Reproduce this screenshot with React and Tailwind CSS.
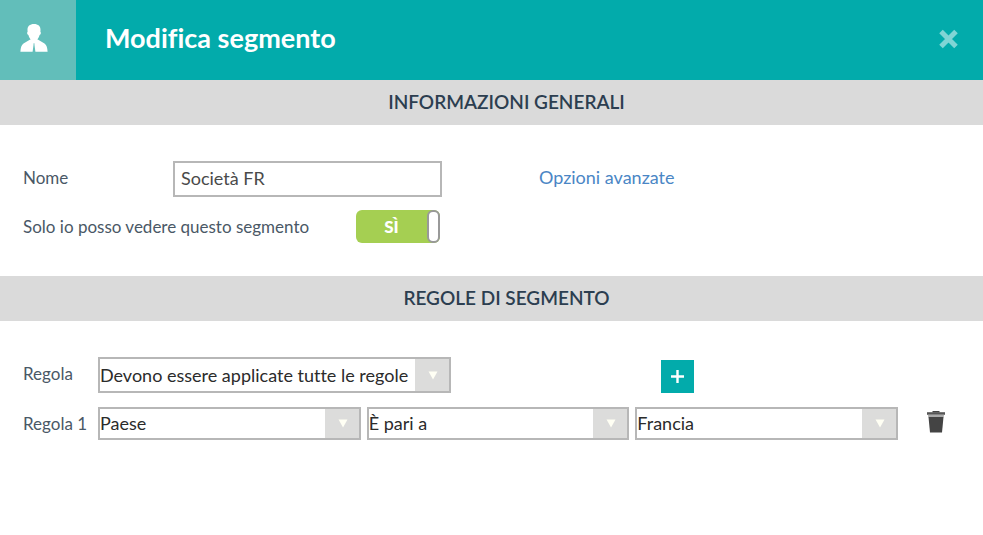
import { useState } from "react";

function SelectBox({ id, label, value, options, onChange, className }) {
  return (
    <div className={`relative border-2 border-[#b7b7b7] bg-white ${className}`}>
      <select
        id={id}
        aria-label={label}
        value={value}
        onChange={(e) => onChange(e.target.value)}
        className="block h-full w-full appearance-none bg-transparent pr-8 text-[18px] text-[#2b2b2b] outline-none"
      >
        {options.map((option) => (
          <option key={option}>{option}</option>
        ))}
      </select>
      <span className="pointer-events-none absolute inset-y-0 right-0 flex w-[34px] items-center justify-center bg-[#dcdcdb] pl-0.5">
        <svg width="10" height="9" viewBox="0 0 10 9" aria-hidden="true">
          <path d="M0.5 0.5h9L5 8.5z" fill="#fffff4" />
        </svg>
      </span>
    </div>
  );
}

function SectionTitle({ children }) {
  return (
    <h2 className="flex h-[45px] items-center justify-center bg-[#dadada] pl-[30px] text-[19px] font-semibold text-[#2c3e50]">
      {children}
    </h2>
  );
}

export default function App() {
  const [name, setName] = useState("Società FR");
  const [isPrivate, setIsPrivate] = useState(true);
  const [match, setMatch] = useState("Devono essere applicate tutte le regole");
  const [field, setField] = useState("Paese");
  const [operator, setOperator] = useState("È pari a");
  const [country, setCountry] = useState("Francia");

  return (
    <div className="min-h-screen bg-white font-['Lato',sans-serif] text-[17px] text-[#4a5866] [font-variant-ligatures:none]">
      <header className="flex h-20 items-center bg-[#02abab]">
        <div className="flex h-full w-[76px] items-center bg-[#62beba] pb-1 pl-5">
          <svg width="28" height="28" viewBox="0 0 28 28" fill="#fff" aria-hidden="true">
            <path d="M14 0C9.8 0 7.3 2.3 7.5 6L7.6 8C6.5 8.3 7.3 10.8 8.4 11.1C9 13.3 10 14.6 10.4 15.2V17L14 20L17.6 17V15.2C18 14.6 19 13.3 19.6 11.1C20.7 10.8 21.5 8.3 20.4 8L20.5 6C20.7 2.3 18.2 0 14 0Z" />
            <path d="M10.2 15.5L3.5 19.5C1.2 21 0.7 24 0.4 27.7H12.6L13.6 20.5L12.9 18.5L14 17.5L15.1 18.5L14.4 20.5L15.4 27.7H27.6C27.3 24 26.8 21 24.5 19.5L17.8 15.5L14 18.5Z" />
          </svg>
        </div>
        <h1 className="flex-1 pb-1 pl-[29px] text-[27px] font-bold text-white">Modifica segmento</h1>
        <button type="button" aria-label="Chiudi" className="mr-6 pb-0.5">
          <svg width="21" height="20" viewBox="0 0 21 20" aria-hidden="true">
            <path d="M3 2.5L18 17.5M18 2.5L3 17.5" stroke="#80d5d5" strokeWidth="5" />
          </svg>
        </button>
      </header>

      <section>
        <SectionTitle>INFORMAZIONI GENERALI</SectionTitle>
        <div className="px-[23px] pt-9 pb-[33px]">
          <div className="flex h-9 items-center">
            <label htmlFor="name" className="w-[150px] pb-0.5">Nome</label>
            <input
              id="name"
              type="text"
              value={name}
              onChange={(e) => setName(e.target.value)}
              className="h-9 w-[269px] border-2 border-[#b7b7b7] px-1.5 pb-0.5 text-[18px] text-[#4a4a4a] outline-none"
            />
            <a href="#" className="ml-[97px] pb-1 text-[18px] text-[#4a86c5]">Opzioni avanzate</a>
          </div>
          <div className="mt-[13px] flex items-center">
            <label htmlFor="private" className="w-[333px]">Solo io posso vedere questo segmento</label>
            <button
              id="private"
              type="button"
              role="switch"
              aria-checked={isPrivate}
              onClick={() => setIsPrivate(!isPrivate)}
              className={`flex h-[33px] w-[84px] rounded-md text-[17px] font-black text-white ${isPrivate ? "bg-[#a5cf52]" : "flex-row-reverse bg-gray-400"}`}
            >
              <span className="flex-1 self-center">{isPrivate ? "SÌ" : "NO"}</span>
              <span className="h-full w-[13px] rounded-md border-2 border-[#999] bg-white" />
            </button>
          </div>
        </div>
      </section>

      <section>
        <SectionTitle>REGOLE DI SEGMENTO</SectionTitle>
        <div className="px-[23px] pt-9">
          <div className="flex items-center">
            <label htmlFor="match" className="w-[75px] pb-0.5">Regola</label>
            <SelectBox
              id="match"
              value={match}
              onChange={setMatch}
              options={["Devono essere applicate tutte le regole", "Deve essere applicata almeno una regola"]}
              className="h-9 w-[353px]"
            />
            <button type="button" aria-label="Aggiungi regola" className="mt-[3px] ml-[210px] flex size-[33px] items-center justify-center bg-[#02abab]">
              <svg width="13" height="13" viewBox="0 0 13 13" aria-hidden="true">
                <path d="M6.5 0v13M0 6.5h13" stroke="#fff" strokeWidth="2.4" />
              </svg>
            </button>
          </div>
          <div className="mt-3.5 flex items-center">
            <label htmlFor="field" className="w-[75px]">Regola 1</label>
            <div className="grid flex-1 grid-cols-3 gap-1.5">
              <SelectBox id="field" value={field} onChange={setField} options={["Paese", "Città", "Lingua"]} className="h-[33px]" />
              <SelectBox label="Operatore" value={operator} onChange={setOperator} options={["È pari a", "È diverso da"]} className="h-[33px]" />
              <SelectBox label="Valore" value={country} onChange={setCountry} options={["Francia", "Italia", "Spagna"]} className="h-[33px]" />
            </div>
            <button type="button" aria-label="Elimina regola" className="mr-3.5 mb-1 ml-7">
              <svg width="20" height="22" viewBox="0 0 20 22" aria-hidden="true">
                <path d="M6.5 0h7v1.5h-7z" fill="#444" />
                <path d="M1 1.2h18v2.6H1z" fill="#555" />
                <path d="M2 3.8h16l-.3 2.4H2.3z" fill="#aaa" />
                <path d="M2.5 6h15L16 21.5H4z" fill="#444" />
              </svg>
            </button>
          </div>
        </div>
      </section>
    </div>
  );
}
